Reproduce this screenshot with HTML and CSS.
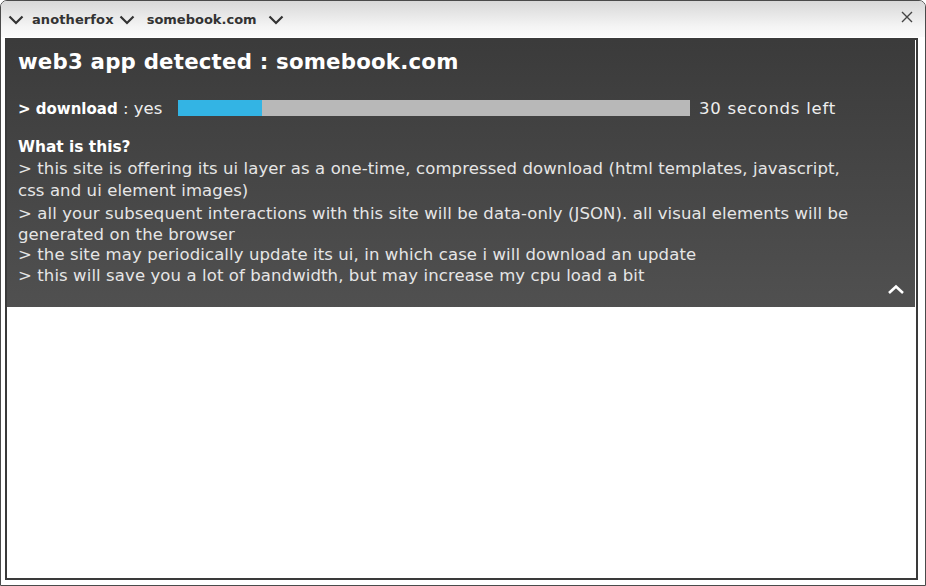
FILE: index.html
```html
<!DOCTYPE html>
<html>
<head>
<meta charset="utf-8">
<link rel="stylesheet" href="styles.css">
</head>
<body>
<div class="window">
  <div class="titlebar">
    <svg class="chev" width="16" height="10" viewBox="0 0 16 10"><path d="M1.5 1.5 L8 8 L14.5 1.5" fill="none" stroke="#333" stroke-width="2.2"/></svg>
    <span class="crumb">anotherfox</span>
    <svg class="chev" width="16" height="10" viewBox="0 0 16 10"><path d="M1.5 1.5 L8 8 L14.5 1.5" fill="none" stroke="#333" stroke-width="2.2"/></svg>
    <span class="crumb crumb2">somebook.com</span>
    <svg class="chev chev3" width="16" height="10" viewBox="0 0 16 10"><path d="M1.5 1.5 L8 8 L14.5 1.5" fill="none" stroke="#333" stroke-width="2.2"/></svg>
    <svg class="close" width="12" height="12" viewBox="0 0 12 12"><path d="M1 1 L11 11 M11 1 L1 11" fill="none" stroke="#444" stroke-width="1.4"/></svg>
  </div>
  <div class="frame">
    <div class="panel">
      <h1 class="title">web3 app detected : somebook.com</h1>
      <div class="row">
        <span class="label"><b>&gt; download</b> : yes</span>
        <div class="bar"><div class="fill" style="width:84px"></div></div>
        <span class="left">30 seconds left</span>
      </div>
      <div class="info">
        <div class="q">What is this?</div>
        <p class="p1">&gt; this site is offering its ui layer as a one-time, compressed download (html templates, javascript, css and ui element images)</p>
        <p>&gt; all your subsequent interactions with this site will be data-only (JSON). all visual elements will be generated on the browser</p>
        <p>&gt; the site may periodically update its ui, in which case i will download an update</p>
        <p>&gt; this will save you a lot of bandwidth, but may increase my cpu load a bit</p>
      </div>
      <svg class="collapse" width="18" height="11" viewBox="0 0 18 11"><path d="M2 9 L9 2.5 L16 9" fill="none" stroke="#fff" stroke-width="2.6"/></svg>
    </div>
  </div>
</div>
</body>
</html>
```
FILE: styles.css
```css
html, body {
  margin: 0;
  padding: 0;
  background: #fff;
}
body {
  width: 926px;
  height: 586px;
  font-family: "DejaVu Sans", sans-serif;
}
.window {
  box-sizing: border-box;
  width: 926px;
  height: 586px;
  border: 1px solid #4a4a4a;
  border-radius: 7px 7px 0 0;
  background: #fff;
  display: flex;
  flex-direction: column;
  overflow: hidden;
}
.titlebar {
  height: 36px;
  flex: none;
  display: flex;
  align-items: center;
  padding-left: 7px;
  background: linear-gradient(#d8d8d8, #f4f4f4 70%, #fafafa);
  color: #333;
  font-weight: bold;
  font-size: 13px;
}
.chev { flex: none; margin-top: 2px; }
.crumb { margin-left: 8px; margin-right: 5px; letter-spacing: 0.1px; }
.crumb2 { margin-left: 12px; margin-right: 11px; letter-spacing: 0; }
.close { margin-left: auto; margin-right: 12px; margin-top: -4px; }
.frame {
  flex: 1;
  margin: 1px 7px 5px 4px;
  border: 2px solid #3a3a3a;
  background: #fff;
}
.panel {
  position: relative;
  height: 267px;
  margin-right: 1px;
  background: linear-gradient(#3b3b3b, #505050);
  padding: 0 55px 0 11px;
  box-sizing: border-box;
  color: #e6e6e6;
}
.title {
  margin: 0;
  padding-top: 7px;
  font-size: 21.3px;
  line-height: 30px;
  font-weight: bold;
  color: #fff;
  letter-spacing: 0.2px;
}
.row {
  display: flex;
  align-items: center;
  margin-top: 20px;
  height: 22px;
  font-size: 16.5px;
}
.label {
  width: 160px;
  color: #eee;
  white-space: nowrap;
}
.label b { color: #fff; font-size: 15px; }
.bar {
  width: 512px;
  height: 16px;
  background: #b8b8b8;
}
.fill {
  height: 100%;
  background: #33b4e4;
}
.left { margin-left: 9px; color: #eee; letter-spacing: 0.75px; }
.info {
  margin-top: 18px;
  font-size: 16.5px;
  line-height: 20.5px;
  letter-spacing: 0.1px;
}
.q { font-weight: bold; color: #fff; font-size: 15.4px; letter-spacing: 0; line-height: 21px; }
.info p { margin: 0; }
.p1 { line-height: 22px; margin-bottom: 2px !important; }
.collapse {
  position: absolute;
  right: 10px;
  bottom: 12px;
}
```
